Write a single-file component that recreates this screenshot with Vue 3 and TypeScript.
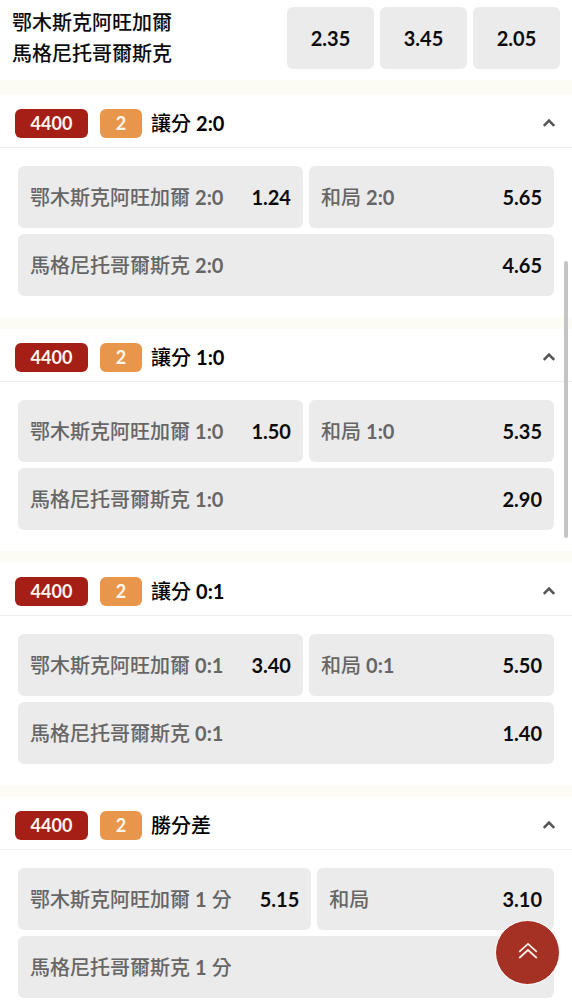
<script setup lang="ts">
import { ref } from 'vue'

interface Option {
  name: string
  score: string
  unit?: string
  odds: string
}

interface Market {
  id: number
  code: string
  count: string
  title: string
  score: string
  open: boolean
  options: Option[]
}

const home = '鄂木斯克阿旺加爾'
const away = '馬格尼托哥爾斯克'
const mainOdds: string[] = ['2.35', '3.45', '2.05']

function handicap(id: number, score: string, odds: [string, string, string]): Market {
  return {
    id, code: '4400', count: '2', title: '讓分', score, open: true,
    options: [
      { name: home, score, odds: odds[0] },
      { name: '和局', score, odds: odds[1] },
      { name: away, score, odds: odds[2] },
    ],
  }
}

const markets = ref<Market[]>([
  handicap(1, '2:0', ['1.24', '5.65', '4.65']),
  handicap(2, '1:0', ['1.50', '5.35', '2.90']),
  handicap(3, '0:1', ['3.40', '5.50', '1.40']),
  {
    id: 4, code: '4400', count: '2', title: '勝分差', score: '', open: true,
    options: [
      { name: home, score: '1', unit: '分', odds: '5.15' },
      { name: '和局', score: '', odds: '3.10' },
      { name: away, score: '1', unit: '分', odds: '' },
    ],
  },
])

const page = ref<HTMLElement | null>(null)

function toTop(): void {
  page.value?.scrollTo({ top: 0, behavior: 'smooth' })
}
</script>

<template>
  <main ref="page" class="page">
    <header class="match">
      <div class="teams">
        <div>{{ home }}</div>
        <div>{{ away }}</div>
      </div>
      <div class="main-odds">
        <button v-for="odds in mainOdds" :key="odds" type="button" class="main-odd strong">{{ odds }}</button>
      </div>
    </header>

    <section v-for="market in markets" :key="market.id" class="market">
      <button type="button" class="market-head" :aria-expanded="market.open" @click="market.open = !market.open">
        <span class="badge code strong">{{ market.code }}</span>
        <span class="badge count strong">{{ market.count }}</span>
        <span class="title">{{ market.title }} <span class="strong">{{ market.score }}</span></span>
        <svg class="chevron" :class="{ closed: !market.open }" width="14" height="12" viewBox="0 0 14 12" aria-hidden="true">
          <path d="M1.8 8.8 L7 3.6 L12.2 8.8" fill="none" stroke="#555" stroke-width="2.6" />
        </svg>
      </button>
      <div v-if="market.open" class="options">
        <button v-for="option in market.options" :key="option.name" type="button" class="option">
          <span class="label">{{ option.name }} <span class="strong">{{ option.score }}</span> {{ option.unit }}</span>
          <span class="strong">{{ option.odds }}</span>
        </button>
      </div>
    </section>

    <div class="scroll-thumb" aria-hidden="true"></div>
    <button type="button" class="to-top" aria-label="Top" @click="toTop">
      <svg width="20" height="18" viewBox="0 0 20 18" aria-hidden="true">
        <path d="M1.2 9.8 L10 1.8 L18.8 9.8 M1.2 16 L10 8 L18.8 16" fill="none" stroke="#fff2ea" stroke-width="1.7" />
      </svg>
    </button>
  </main>
</template>

<style>
body {
  margin: 0;
  background: #fdfcf4;
}
</style>

<style scoped>
.page {
  height: 100vh;
  overflow-y: auto;
  scrollbar-width: none;
  background: #fdfcf4;
  color: #0c0c0c;
  font-family: Lato, "Noto Sans CJK TC", sans-serif;
  font-size: 20px;
  font-weight: 500;
  line-height: 31px;
}

button {
  margin: 0;
  padding: 0;
  border: 0;
  font: inherit;
  color: inherit;
  cursor: pointer;
}

.page .strong {
  font-weight: 700;
}

.match {
  display: flex;
  justify-content: space-between;
  padding: 7px 12px 11px;
  background: #fff;
}

.main-odds {
  display: flex;
  gap: 6px;
}

.main-odd {
  width: 87px;
  border-radius: 6px;
  background: #ebebeb;
}

.market {
  margin-top: 12px;
  background: #fff;
}

.match + .market {
  margin-top: 15px;
}

.market-head {
  display: flex;
  align-items: center;
  width: 100%;
  padding: 14px 16px 9px 15px;
  border-bottom: 1px solid #eeeeee;
  background: #fff;
  text-align: left;
}

.badge {
  border-radius: 6px;
  color: #fff6ee;
  font-size: 18px;
  line-height: 29px;
  text-align: center;
}

.code {
  width: 73px;
  background: #a51f17;
}

.count {
  width: 42px;
  margin-left: 12px;
  background: #e8964c;
}

.title {
  margin-left: 9px;
  line-height: 29px;
  color: #000;
}

.chevron {
  margin-bottom: 2px;
  margin-left: auto;
}

.chevron.closed {
  transform: rotate(180deg);
}

.options {
  display: flex;
  flex-wrap: wrap;
  gap: 6px;
  padding: 18px 18px 21px;
}

.option {
  display: flex;
  flex: 1 0 0;
  align-items: center;
  justify-content: space-between;
  gap: 28px;
  height: 62px;
  padding: 0 12px;
  border-radius: 6px;
  background: #ebebeb;
  white-space: nowrap;
}

.option:first-child {
  flex: 0 0 auto;
}

.option:last-child {
  flex: 1 0 100%;
}

.label {
  color: #666;
}

.scroll-thumb {
  position: fixed;
  top: 261px;
  right: 4px;
  width: 4px;
  height: 277px;
  border-radius: 2px;
  background: #c4c4c4;
}

.to-top {
  position: fixed;
  right: 12px;
  bottom: 15px;
  display: flex;
  align-items: center;
  justify-content: center;
  width: 65px;
  height: 65px;
  padding-bottom: 4px;
  border: 1px solid #fff;
  border-radius: 50%;
  background: #a53125;
}
</style>
